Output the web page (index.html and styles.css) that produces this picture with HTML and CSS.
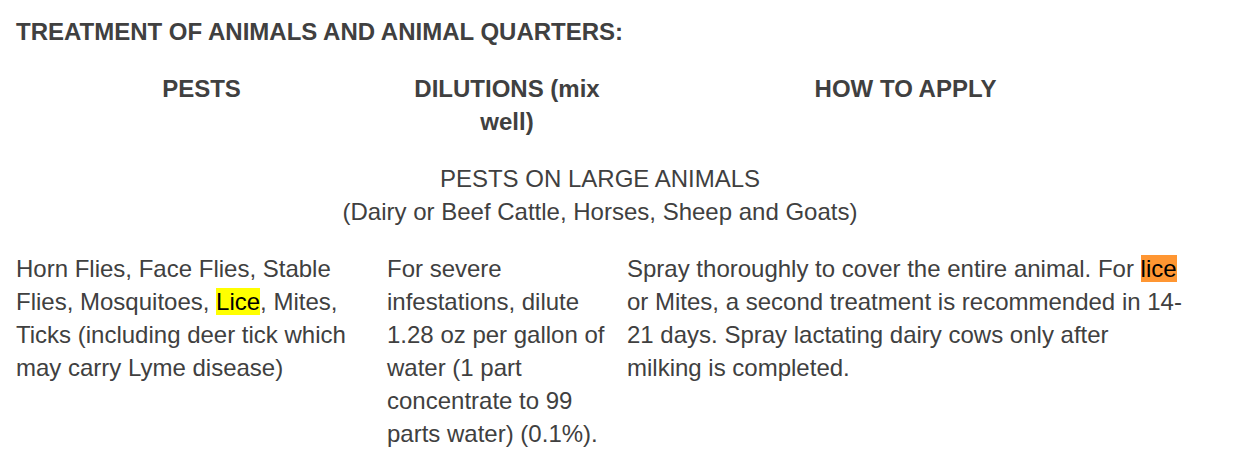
FILE: index.html
```html
<!DOCTYPE html>
<html>
<head>
<meta charset="utf-8">
<link rel="stylesheet" href="styles.css">
</head>
<body>
<div class="page">
  <h2 class="title">TREATMENT OF ANIMALS AND ANIMAL QUARTERS:</h2>
  <div class="table">
    <div class="row head">
      <div class="cell">PESTS</div>
      <div class="cell">DILUTIONS (mix well)</div>
      <div class="cell">HOW TO APPLY</div>
    </div>
    <div class="row section">
      <div class="cell span">PESTS ON LARGE ANIMALS<br>(Dairy or Beef Cattle, Horses, Sheep and Goats)</div>
    </div>
    <div class="row body">
      <div class="cell">Horn Flies, Face Flies, Stable Flies, Mosquitoes, <span class="hl-yellow">Lice</span>, Mites, Ticks (including deer tick which may carry Lyme disease)</div>
      <div class="cell">For severe infestations, dilute 1.28 oz per gallon of water (1 part concentrate to 99 parts water) (0.1%).</div>
      <div class="cell">Spray thoroughly to cover the entire animal. For <span class="hl-orange">lice</span> or Mites, a second treatment is recommended in 14-21 days. Spray lactating dairy cows only after milking is completed.</div>
    </div>
  </div>
</div>
</body>
</html>
```

FILE: styles.css
```css
html, body {
  margin: 0;
  padding: 0;
  background: #ffffff;
}
.page {
  padding: 15px 0 0 16px;
  font-family: "Liberation Sans", Arial, sans-serif;
  font-size: 24px;
  line-height: 33px;
  color: #404040;
}
.title {
  margin: 0 0 12px 0;
  font-size: 24px;
  font-weight: bold;
  line-height: 33px;
  color: #404040;
}
.table {
  width: 1168px;
}
.row {
  display: grid;
  grid-template-columns: 371px 240px 557px;
  padding: 12px 0;
}
.head .cell {
  font-weight: bold;
  text-align: center;
}
.section .span {
  grid-column: 1 / 4;
  text-align: center;
}
.hl-yellow {
  background: #ffff00;
  color: #000000;
}
.hl-orange {
  background: #ff9632;
  color: #000000;
}
```
